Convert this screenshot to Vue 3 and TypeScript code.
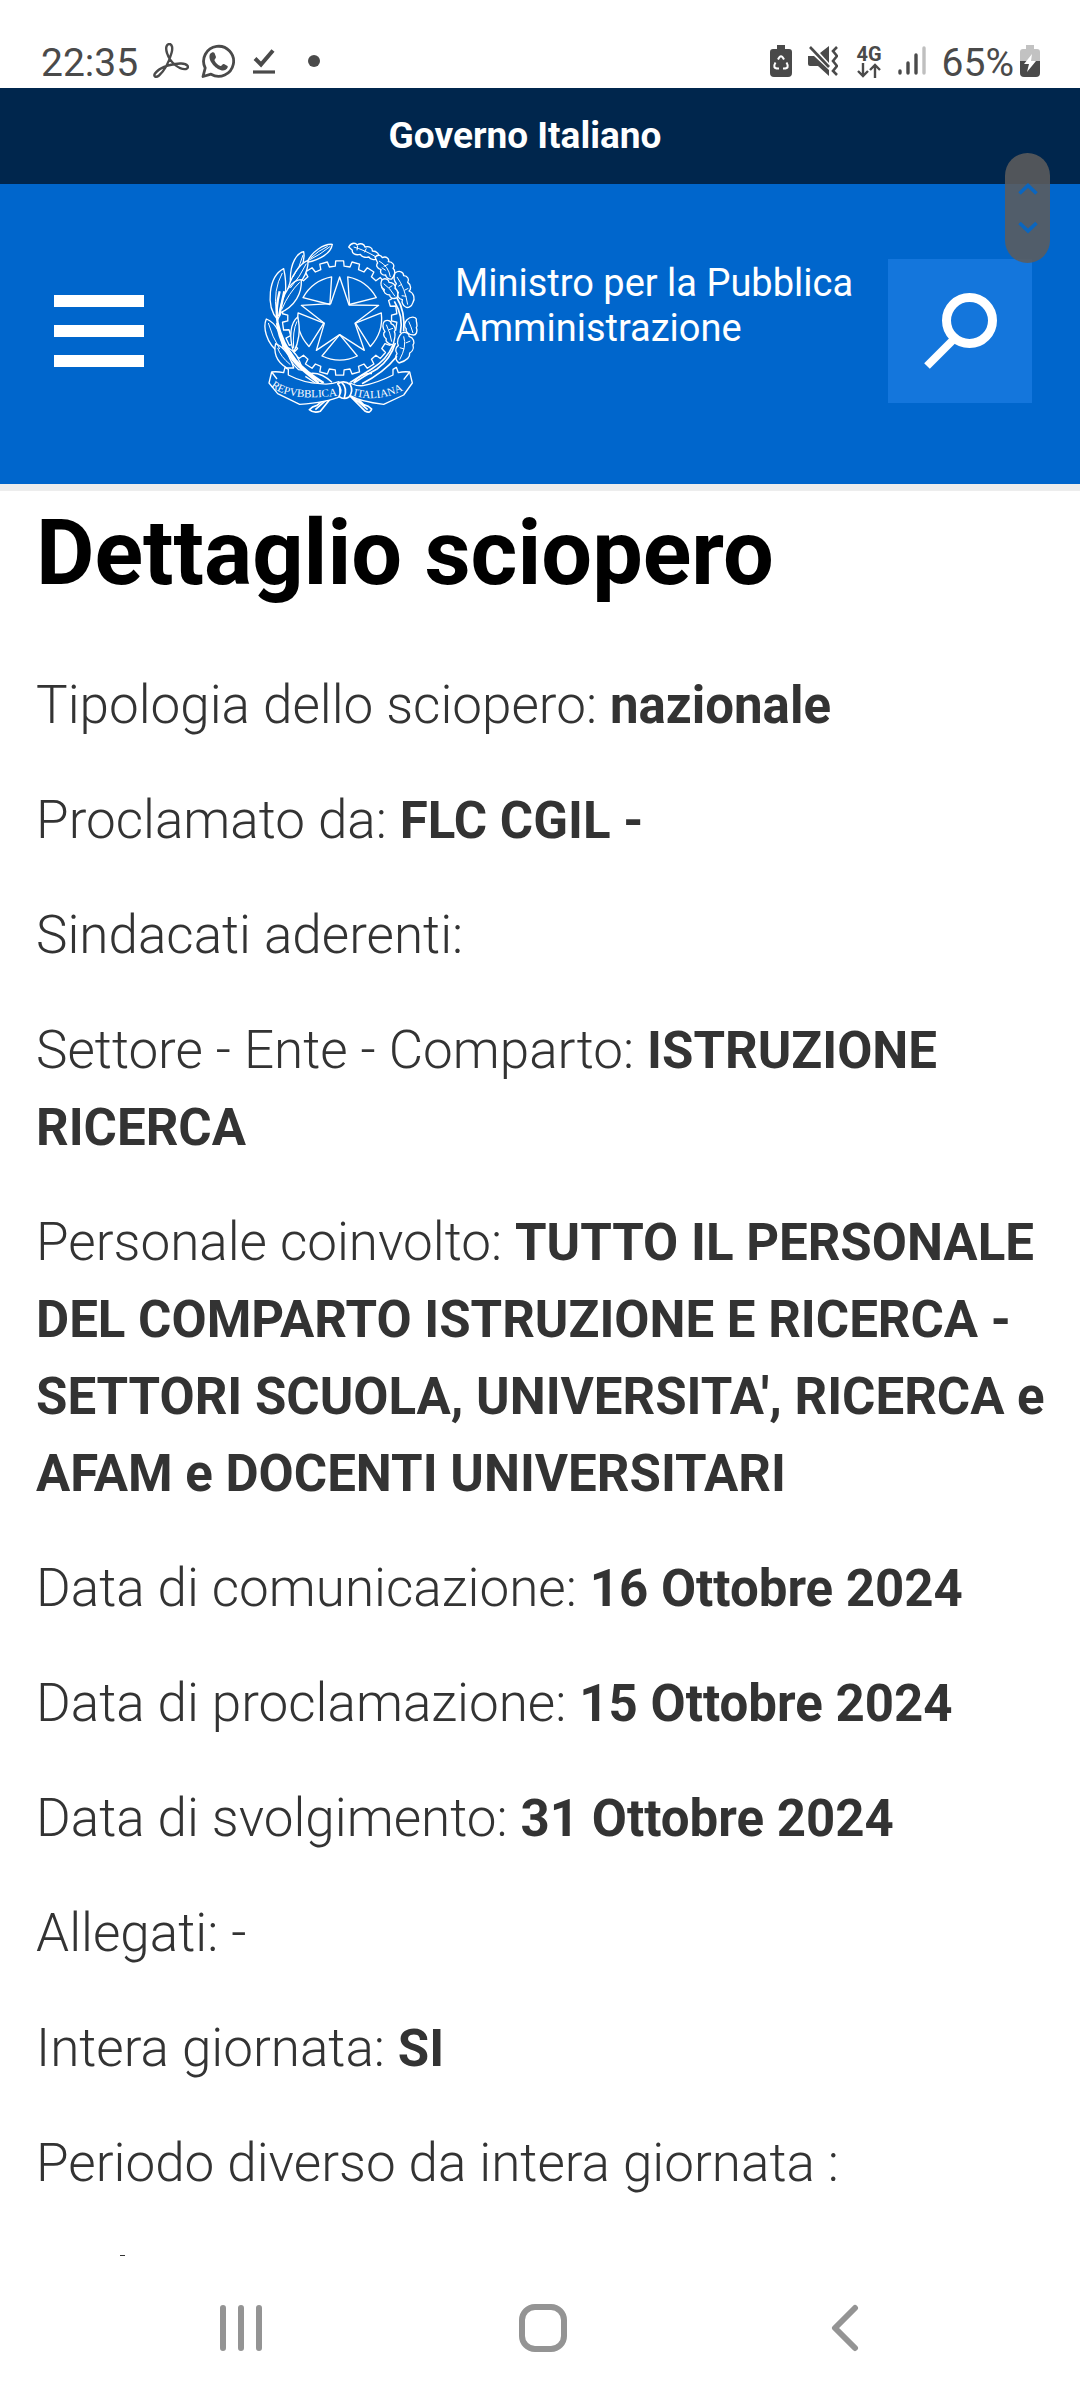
<script setup lang="ts">
interface Detail {
  label: string
  value?: string
}

const details: Detail[] = [
  { label: 'Tipologia dello sciopero:', value: 'nazionale' },
  { label: 'Proclamato da:', value: 'FLC CGIL -' },
  { label: 'Sindacati aderenti:' },
  { label: 'Settore - Ente - Comparto:', value: 'ISTRUZIONE RICERCA' },
  {
    label: 'Personale coinvolto:',
    value:
      "TUTTO IL PERSONALE DEL COMPARTO ISTRUZIONE E RICERCA - SETTORI SCUOLA, UNIVERSITA', RICERCA e AFAM e DOCENTI UNIVERSITARI",
  },
  { label: 'Data di comunicazione:', value: '16 Ottobre 2024' },
  { label: 'Data di proclamazione:', value: '15 Ottobre 2024' },
  { label: 'Data di svolgimento:', value: '31 Ottobre 2024' },
  { label: 'Allegati: -' },
  { label: 'Intera giornata:', value: 'SI' },
  { label: 'Periodo diverso da intera giornata :' },
]

const CX = 298
const CY = 295

// Outline of the cogwheel behind the star
function gear(teeth: number, inner: number, outer: number): string {
  const step = (Math.PI * 2) / teeth
  const points: string[] = []
  for (let i = 0; i < teeth; i++) {
    const a = -Math.PI / 2 + i * step
    const at = (r: number, k: number) =>
      `${(CX + r * Math.cos(a + k * step)).toFixed(1)} ${(CY + r * Math.sin(a + k * step)).toFixed(1)}`
    points.push(at(inner, -0.3), at(outer, -0.24), at(outer, 0.24), at(inner, 0.3))
  }
  return `M${points.join('L')}Z`
}

const gearPath = gear(22, 156, 172)
const sectors = [0, 72, 144, 216, 288]

const olive = [
  'M200 128C215 95 250 72 276 74C272 100 240 120 200 128Z',
  'M150 178C150 130 170 100 190 96C196 130 180 160 150 190Z',
  'M140 220C150 170 180 130 203 122C205 160 180 200 140 220Z',
  'M112 300C75 260 85 170 130 147C140 190 140 250 112 300Z',
  'M118 280C125 220 155 180 183 180C185 220 165 260 118 280Z',
  'M118 400C75 370 68 320 78 298C110 310 125 350 130 400Z',
  'M160 398C145 350 150 310 172 292C182 330 175 370 160 398Z',
  'M140 445C105 425 100 395 106 372C135 385 150 410 160 445Z',
  'M175 450C145 425 142 400 145 385C165 395 178 420 188 452Z',
]
const oak = [
  'M325 82C335 66 347 70 350 76C362 68 372 74 374 82C388 78 397 86 396 94C410 94 418 104 416 116C402 124 388 118 386 112C374 116 362 110 360 104C344 108 334 100 336 92Z',
  'M404 112C414 102 424 108 426 114C438 108 448 118 444 126C458 126 464 138 458 146C468 154 462 170 454 178C444 180 436 172 436 166C424 168 418 158 422 150C410 148 406 136 412 130Z',
  'M464 160C478 150 490 158 490 168C502 168 508 180 502 188C514 196 512 210 506 214C522 220 524 238 518 248C514 262 502 266 496 262C486 258 484 246 486 240C474 238 468 226 474 218C464 212 462 198 468 192C460 182 460 170 464 160Z',
  'M424 182C434 172 446 180 446 188C458 188 468 198 464 206C474 212 474 226 470 234C458 240 448 234 448 226C436 226 428 216 432 210C422 204 420 192 424 182Z',
  'M500 300C512 288 526 292 528 298C526 308 534 316 528 324C534 336 526 346 520 346C506 346 494 336 498 328C490 320 492 308 500 300Z',
  'M484 340C498 334 508 344 506 350C520 354 524 368 518 376C522 390 512 398 508 400C510 414 496 424 476 430C462 420 466 406 470 402C462 392 468 382 474 378C468 366 474 350 484 340Z',
  'M432 305C444 298 454 306 452 312C464 316 468 330 462 336C468 346 462 360 458 376C444 374 434 364 438 358C428 350 428 340 434 336C426 326 426 312 432 305Z',
]
</script>

<template>
  <div class="screen">
    <header class="status">
      <span class="clock">22:35</span>
      <svg class="ic-pdf" width="36" height="36" viewBox="0 0 36 36" fill="none" stroke="#4a4a4a" stroke-width="2.4" stroke-linejoin="round">
        <path d="M14 10C12 4 14 1 16.500 1C19 1 20 5 18.500 10C16 19 11 28 6 32.500C3 35 0 33.500 2 30.500C6 25 16 21.500 27 20.500C35 20 37 25 33 26C27 27 17 20 14 10Z" />
      </svg>
      <svg class="ic-wa" width="36" height="36" viewBox="0 0 36 36">
        <path d="M3 33.500L5.200 25A15 15 0 1 1 11 31.200Z" fill="none" stroke="#4a4a4a" stroke-width="2.800" stroke-linejoin="round" />
        <path d="M10 11C12 8.500 14 9 14.500 10L16 14C16 15.500 14 16.500 14.500 17.500C16 20.500 18 22 20.500 23C21.500 23.500 22.500 20.500 24 21L27.500 23C28.500 24 26.500 27.500 23 27.500C17 27.500 7 18 10 11Z" fill="#4a4a4a" />
      </svg>
      <svg class="ic-check" width="24" height="26" viewBox="0 0 24 26" fill="none" stroke="#4a4a4a">
        <path d="M3 10.500L9 16.500L21 2.500" stroke-width="4" />
        <path d="M1 24H23" stroke-width="3.200" />
      </svg>
      <span class="dot"></span>
      <span class="fill"></span>
      <svg class="ic-batt" width="22" height="32" viewBox="0 0 22 32">
        <path d="M7 0H15V4H19Q22 4 22 7V28Q22 32 18 32H4Q0 32 0 28V7Q0 4 3 4H7Z" fill="#4a4a4a" />
        <path d="M8 14.500Q11 8 14 14.500M16.500 17.500Q20 23.500 14 23.500H13M9 23.500H8Q2 23.500 5.500 17.500" fill="none" stroke="#fff" stroke-width="2" />
      </svg>
      <svg class="ic-mute" width="30" height="32" viewBox="0 0 30 32">
        <path d="M0 11H6L21 25V31L10 21H2Q0 21 0 19ZM12 8L21 1V18Z" fill="#4a4a4a" />
        <path d="M2 2L21 22" stroke="#4a4a4a" stroke-width="2.600" />
        <path d="M29 2L25 6L29 11L25 16L29 21L25 26L29 30" fill="none" stroke="#4a4a4a" stroke-width="2.600" />
      </svg>
      <span class="net">
        <span>4G</span>
        <svg width="24" height="15" viewBox="0 0 24 15" fill="none" stroke="#4a4a4a" stroke-width="2.400">
          <path d="M6 0V13M1 8L6 13L11 8M18 15V2M13 7L18 2L23 7" />
        </svg>
      </span>
      <svg class="ic-sig" width="28" height="30" viewBox="0 0 28 30" stroke-width="3.400" stroke-linecap="round" stroke="#4a4a4a">
        <path d="M2 25V27M10 17V27M18 9V27" />
        <path d="M26 2V27" stroke="#bfbfbf" />
      </svg>
      <span class="pct">65%</span>
      <svg class="ic-charge" width="20" height="32" viewBox="0 0 20 32">
        <path d="M6 0H14V4H17Q20 4 20 7V16H0V7Q0 4 3 4H6Z" fill="#c2c2c2" />
        <path d="M0 16H20V28Q20 32 16 32H4Q0 32 0 28Z" fill="#4a4a4a" />
        <path d="M12 9L4 19H9L7 27L16 16H11Z" fill="#fff" />
      </svg>
    </header>

    <div class="gov"><a href="#">Governo Italiano</a></div>

    <div class="brand">
      <button class="menu" aria-label="Menu"><i></i><i></i><i></i></button>
      <svg class="emblem" width="156" height="174" viewBox="68 64 468 522" fill="none" stroke="#fff" stroke-width="4" stroke-linejoin="round">
        <path :d="gearPath" />
        <path d="M298 172L326 256L415 257L344 311L372 392L298 345L228 392L252 311L183 257L271 252Z" />
        <path v-for="r in sectors" :key="r" d="M298 345L245 409A125 125 0 0 0 351 409Z" :transform="`rotate(${r} 298 295)`" />
        <g fill="#0066cc">
          <path v-for="p in olive" :key="p" :d="p" />
          <path v-for="p in oak" :key="p" :d="p" />
        </g>
        <g stroke-width="3">
          <path d="M205 122Q240 105 270 80M210 116Q235 92 262 80M158 172Q180 140 188 106M150 205Q180 170 198 132M108 280Q98 210 126 160M124 270Q145 220 178 188M118 388Q95 350 84 310M160 385Q156 335 170 305M150 435Q120 410 112 385M180 440Q158 420 150 395" />
          <path d="M340 82Q370 90 408 112M350 92L352 78M372 98L378 86M416 124Q445 140 450 172M430 140L444 134M436 152L424 144M470 172Q494 205 502 255M484 194L474 200M492 212L504 206M498 230L484 228M430 192Q450 205 464 230M446 204L456 198M505 305Q512 320 518 340M490 350Q500 380 478 420M496 370L510 364M492 388L478 384M438 315Q450 340 454 366M446 330L458 326" />
        </g>
        <path d="M132 215L116 290M118 215Q104 270 112 310Q125 370 165 420Q195 455 250 490M110 310Q120 385 175 440Q200 462 235 490" stroke-width="7" />
        <path d="M470 235Q495 275 490 335M462 245Q490 290 480 340M465 370Q450 420 410 448Q370 470 340 490M458 376Q440 420 395 447Q365 465 330 488M470 410Q430 460 365 492" stroke-width="5" />
        <path d="M205 462Q240 455 275 488M395 462Q365 458 340 488M195 470L225 490" />
        <path d="M280 525L240 575Q220 582 207 570Q215 560 230 557L262 530M270 530L225 570M325 525L375 575Q390 582 394 568Q385 558 370 555L345 530M335 530L382 570" fill="#0066cc" stroke-width="5" />
        <path d="M86 490L94 457Q110 455 130 459L134 443L144 449V466Q190 490 240 492Q270 496 296 486L300 530Q260 548 178 554L112 522Z" fill="#0066cc" />
        <path d="M516 490L508 457Q490 455 474 459L468 443L458 449V466Q410 490 368 498Q350 500 328 490L330 528Q360 546 430 554L490 526Z" fill="#0066cc" />
        <path d="M94 457L110 478M508 457L490 480" />
        <path d="M292 492Q312 480 330 495Q340 515 326 532Q310 542 296 530Q308 510 292 492ZM304 488Q322 505 312 534" fill="#0066cc" stroke-width="5" />
        <path id="ribbon-left" d="M92 500Q150 552 330 522" stroke="none" />
        <path id="ribbon-right" d="M338 528Q440 556 540 480" stroke="none" />
        <g class="motto" fill="#fff" stroke="none">
          <text><textPath href="#ribbon-left">REPVBBLICA</textPath></text>
          <text><textPath href="#ribbon-right">ITALIANA</textPath></text>
        </g>
      </svg>
      <a class="ministry" href="#">Ministro per la Pubblica<br />Amministrazione</a>
      <button class="search" aria-label="Cerca">
        <svg width="144" height="144" viewBox="0 0 144 144" fill="none" stroke="#fff">
          <circle cx="81.500" cy="61.500" r="23" stroke-width="9" />
          <path d="M66 80L39 107" stroke-width="8" />
        </svg>
      </button>
    </div>

    <div class="scroller" aria-hidden="true">
      <svg width="45" height="110" viewBox="0 0 45 110" fill="none" stroke="#0b66bf" stroke-width="3.600">
        <path d="M14.500 40.500L23 32.500L31.500 40.500M14.500 70L23 78L31.500 70" />
      </svg>
    </div>

    <main>
      <h1>Dettaglio sciopero</h1>
      <p v-for="d in details" :key="d.label">
        {{ d.label }}
        <strong v-if="d.value">{{ d.value }}</strong>
      </p>
      <span class="peek"></span>
    </main>

    <nav>
      <button aria-label="Recenti">
        <svg width="48" height="48" viewBox="0 0 48 48" stroke="#949494" stroke-width="6" stroke-linecap="round"><path d="M6 4V44M24 4V44M42 4V44" /></svg>
      </button>
      <button aria-label="Home">
        <svg width="48" height="48" viewBox="0 0 48 48" fill="none" stroke="#949494" stroke-width="6"><rect x="3" y="3" width="42" height="42" rx="13" /></svg>
      </button>
      <button aria-label="Indietro">
        <svg width="48" height="48" viewBox="0 0 48 48" fill="none" stroke="#949494" stroke-width="6" stroke-linecap="round" stroke-linejoin="round"><path d="M34 4L14 24L34 44" /></svg>
      </button>
    </nav>
  </div>
</template>

<style>
body {
  margin: 0;
  background: #fff;
}
</style>

<style scoped>
.screen {
  position: relative;
  display: flex;
  flex-direction: column;
  height: 100vh;
  background: #fff;
  color: #333;
  font-family: Roboto, "Liberation Sans", sans-serif;
}
button {
  border: 0;
  padding: 0;
  background: none;
}
a {
  color: #fff;
  text-decoration: none;
}
svg {
  display: block;
  flex: none;
}
.status {
  display: flex;
  flex: none;
  align-items: center;
  box-sizing: border-box;
  height: 88px;
  padding: 34px 40px 0 41px;
  color: #4a4a4a;
  font-size: 39px;
  line-height: 54px;
}
.clock,
.pct {
  padding-top: 4px;
}
.ic-pdf { margin-left: 15px; }
.ic-wa { margin-left: 11px; }
.ic-check { margin-left: 16px; }
.dot {
  width: 12px;
  height: 12px;
  margin-left: 32px;
  border-radius: 50%;
  background: #4a4a4a;
}
.fill { flex: 1; }
.ic-mute { margin-left: 16px; }
.net {
  display: flex;
  flex-direction: column;
  align-items: center;
  margin-left: 18px;
  font-size: 20px;
  font-weight: 700;
  line-height: 18px;
}
.ic-sig { margin-left: 16px; }
.pct { margin-left: 16px; }
.ic-charge { margin-left: 6px; }
.gov {
  flex: none;
  padding-right: 30px;
  background: #00264d;
  font-size: 37px;
  font-weight: 700;
  line-height: 96px;
  text-align: center;
}
.brand {
  display: flex;
  flex: none;
  align-items: center;
  box-sizing: border-box;
  height: 307px;
  padding: 0 48px 6px 54px;
  border-bottom: 7px solid #ededed;
  background: #0066cc;
}
.menu {
  display: flex;
  flex: none;
  flex-direction: column;
  gap: 18px;
  width: 90px;
}
.menu i {
  height: 12px;
  background: #fff;
}
.emblem {
  margin: 0 36px 6px 119px;
}
.motto {
  font-family: "Liberation Serif", serif;
  font-size: 33px;
}
.ministry {
  flex: 1;
  padding-bottom: 50px;
  font-size: 38px;
  line-height: 45px;
  white-space: nowrap;
}
.search {
  flex: none;
  background: #1476dc;
}
.scroller {
  position: absolute;
  top: 153px;
  right: 30px;
  border-radius: 23px;
  background: rgba(92, 92, 92, 0.88);
}
main {
  position: relative;
  flex: 1;
  min-height: 0;
  padding: 0 30px 0 36px;
  overflow: hidden;
  font-size: 53px;
  line-height: 77px;
}
h1 {
  margin: 12px 0 62px;
  color: #000;
  font-size: 90px;
  line-height: 102px;
}
p {
  margin: 0 0 38px;
  font-weight: 350;
}
strong {
  font-size: 51px;
  font-weight: 700;
}
.peek {
  position: absolute;
  bottom: 0;
  left: 120px;
  width: 5px;
  height: 1px;
  background: #333;
}
nav {
  display: grid;
  flex: none;
  grid-template-columns: repeat(3, 1fr);
  place-items: center;
  height: 144px;
  padding: 0 84px 0 90px;
}
</style>
